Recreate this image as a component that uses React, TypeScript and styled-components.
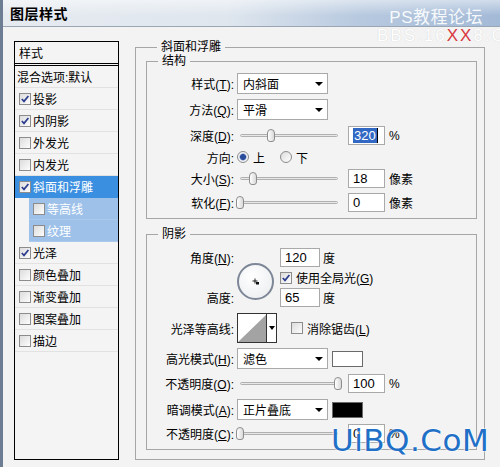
import styled, { createGlobalStyle } from "styled-components"

const GlobalStyle = createGlobalStyle`
    html, body {
        margin: 0;
        padding: 0;
        background: #f3f3f3;
    }

    body {
        font-family: "Liberation Sans", "Noto Sans CJK SC", sans-serif;
        font-size: 12px;
        color: #000;
    }
`

const Window = styled.div`
    position: relative;
    width: 500px;
    height: 467px;
    overflow: hidden;
    box-sizing: border-box;
    background: #f3f3f3;
    border-left: 3px solid #6d7d93;
`

const TitleBar = styled.div`
    height: 27px;
    box-sizing: border-box;
    border-bottom: 1px solid #9aa6b4;
    padding-left: 7px;
    display: flex;
    align-items: center;
    background:
        linear-gradient(to bottom, rgba(255, 255, 255, 0.5), rgba(255, 255, 255, 0) 60%),
        linear-gradient(to right, #e6ebf0 0%, #dfe6ee 45%, #b7c9df 72%, #a3bad7 100%);
`

const Title = styled.span`
    font-size: 14px;
    font-weight: bold;
    letter-spacing: 0.5px;
`

const Body = styled.div`
    display: flex;
    gap: 16px;
    padding: 14px 0 0 11px;
`

const StyleList = styled.div`
    width: 105px;
    height: 419px;
    box-sizing: border-box;
    border: 1px solid #000;
    background: #f4f4f4;
`

const ListHeader = styled.div`
    height: 21px;
    display: flex;
    align-items: center;
    padding-left: 4px;
    border-bottom: 3px double #000;
`

const ListItem = styled.div<{ $selected?: boolean; $sub?: boolean; $plain?: boolean }>`
    height: 22px;
    box-sizing: border-box;
    display: flex;
    align-items: center;
    gap: 2px;
    padding-left: ${props => props.$plain ? 2 : 4}px;
    margin-left: ${props => props.$sub ? 14 : 0}px;
    border-bottom: 1px solid ${props => props.$selected ? '#3b8fe0' : props.$sub ? '#a9c8ea' : '#e2e2e2'};
    background: ${props => props.$selected ? '#3b8fe0' : props.$sub ? '#9dc1e9' : 'transparent'};
    color: ${props => (props.$selected || props.$sub) ? '#fff' : '#000'};
`

const CheckBoxBox = styled.span`
    width: 12px;
    height: 12px;
    box-sizing: border-box;
    border: 1px solid #8c8c8c;
    background: linear-gradient(135deg, #dcdcdc, #fdfdfd);
    display: inline-flex;
    align-items: center;
    justify-content: center;
    flex-shrink: 0;
`

const CheckBox = ({ checked }: { checked?: boolean }) => (
    <CheckBoxBox>
        {checked && (
            <svg width="10" height="10" viewBox="0 0 10 10">
                <path d="M1.8 5 L4 7.4 L8.4 2" fill="none" stroke="#2c3d8f" strokeWidth="1.7" />
            </svg>
        )}
    </CheckBoxBox>
)

const Main = styled.div`
    width: 350px;
`

const Group = styled.fieldset<{ $outer?: boolean; $gapTop?: number }>`
    margin: ${props => props.$gapTop ?? 0}px 0 0 0;
    padding: ${props => props.$outer ? '2px 7px 9px 10px' : '0'};
    border: 1px solid #a6a6a6;
    min-width: 0;
`

const Legend = styled.legend`
    margin-left: 11px;
    padding: 0 4px;
    font-size: 12px;
    line-height: 12px;
`

const GroupBody = styled.div<{ $top: number }>`
    padding: ${props => props.$top}px 0 6px 0;
`

const Row = styled.div<{ $h: number; $mt?: number }>`
    display: flex;
    align-items: center;
    height: ${props => props.$h}px;
    margin-top: ${props => props.$mt ?? 0}px;
`

const Label = styled.div`
    width: 87px;
    margin-right: 3px;
    text-align: right;
    white-space: nowrap;
`

const Select = styled.div`
    width: 91px;
    height: 21px;
    box-sizing: border-box;
    border: 1px solid #a9a9a9;
    background: #fff;
    display: flex;
    align-items: center;
    justify-content: space-between;
    padding: 0 4px 0 5px;

    &::after {
        content: "";
        border-left: 4px solid transparent;
        border-right: 4px solid transparent;
        border-top: 4px solid #000;
    }
`

const Slider = styled.div`
    position: relative;
    width: 104px;
    height: 19px;
    margin-right: 7px;

    &::before {
        content: "";
        position: absolute;
        left: 3px;
        right: 3px;
        top: 8px;
        height: 3px;
        box-sizing: border-box;
        border: 1px solid #b0b0b0;
        border-radius: 2px;
        background: #e8e8e8;
    }
`

const Thumb = styled.span`
    position: absolute;
    top: 3px;
    width: 8px;
    height: 13px;
    box-sizing: border-box;
    border: 1px solid #8d8d8d;
    border-radius: 4px 4px 3px 3px;
    background: linear-gradient(to right, #ffffff, #d9d9d9);
`

const NumInput = styled.div<{ $w?: number }>`
    width: ${props => props.$w ?? 37}px;
    height: 19px;
    box-sizing: border-box;
    border: 1px solid #a9a9a9;
    background: #fff;
    display: flex;
    align-items: center;
    padding-left: 4px;
    font-size: 13px;
`

const Selected = styled.span`
    background: #3168c4;
    color: #fff;
    padding: 0 1px;
    border-right: 1px solid #000;
`

const Unit = styled.span`
    margin-left: 4px;
`

const RadioDot = styled.span<{ $on?: boolean }>`
    width: 12px;
    height: 12px;
    box-sizing: border-box;
    border-radius: 50%;
    border: 1px solid #8b8b8b;
    background: ${props => props.$on
        ? 'radial-gradient(circle, #2a4a9a 0 2.6px, #8da6d6 3.2px, #f4f4f4 4px)'
        : 'linear-gradient(135deg, #dcdcdc, #fff)'};
    margin-right: 4px;
`

const RadioText = styled.span`
    margin-right: 15px;
`

const AngleBlock = styled.div`
    display: grid;
    grid-template-columns: 87px 37px auto;
    grid-template-rows: 19px 19px 19px;
    column-gap: 3px;
    row-gap: 1px;
    align-items: center;
`

const AngleDial = styled.div`
    grid-column: 2;
    grid-row: 1 / 4;
    width: 37px;
    height: 37px;
    margin-top: 8px;
    box-sizing: border-box;
    border-radius: 50%;
    border: 2px solid #7d8797;
    background: radial-gradient(circle at 40% 35%, #ffffff, #e9ebee);
    display: flex;
    align-items: center;
    justify-content: center;
`

const RightCell = styled.div`
    grid-column: 3;
    display: flex;
    align-items: center;
    gap: 3px;
    padding-left: 3px;
`

const Contour = styled.div`
    width: 40px;
    height: 30px;
    box-sizing: border-box;
    border: 1px solid #333;
    background: #fff;
    display: flex;
`

const ContourArrow = styled.div`
    flex: 1;
    display: flex;
    align-items: center;
    justify-content: center;

    &::after {
        content: "";
        border-left: 3px solid transparent;
        border-right: 3px solid transparent;
        border-top: 4px solid #000;
    }
`

const Swatch = styled.div<{ $color: string }>`
    width: 31px;
    height: 16px;
    margin-left: 4px;
    box-sizing: border-box;
    border: 1px solid #6a6a6a;
    background: ${props => props.$color};
`

const Check = styled.span<{ $ml?: number }>`
    display: flex;
    align-items: center;
    gap: 4px;
    margin-left: ${props => props.$ml ?? 0}px;
`

const TitleMark = styled.div`
    position: absolute;
    top: 3px;
    right: 17px;
    font-size: 17px;
    color: rgba(255, 255, 255, 0.92);
    letter-spacing: 0.5px;
`

const SiteMark = styled.div`
    position: absolute;
    top: 26px;
    left: 374px;
    white-space: nowrap;
    font-size: 17px;
    letter-spacing: 2px;
    color: #ffffff;
    text-shadow: 0 0 1px #c9c9c9;

    b {
        font-weight: normal;
        color: #d8383e;
        text-shadow: none;
    }
`

const UiMark = styled.div`
    position: absolute;
    left: 328px;
    top: 422px;
    font-family: "DejaVu Sans", Verdana, sans-serif;
    font-size: 31px;
    letter-spacing: 0.5px;
    color: #1f70c6;
    text-shadow: 0 0 2px #fff, 0 0 2px #fff;
`

const SliderInput = ({ pos }: { pos: number }) => (
    <Slider>
        <Thumb style={{ left: `${3 + pos * 0.98 - 4}px` }} />
    </Slider>
)

const listItems = [
    { text: '投影', checked: true },
    { text: '内阴影', checked: true },
    { text: '外发光' },
    { text: '内发光' },
    { text: '斜面和浮雕', checked: true, selected: true },
    { text: '等高线', sub: true },
    { text: '纹理', sub: true },
    { text: '光泽', checked: true },
    { text: '颜色叠加' },
    { text: '渐变叠加' },
    { text: '图案叠加' },
    { text: '描边' },
]

const App = () => {
    return (
        <Window>
            <GlobalStyle />
            <TitleBar>
                <Title>图层样式</Title>
            </TitleBar>

            <Body>
                <StyleList>
                    <ListHeader>样式</ListHeader>
                    <ListItem $plain>混合选项:默认</ListItem>
                    {listItems.map(item => (
                        <ListItem key={item.text} $selected={item.selected} $sub={item.sub}>
                            <CheckBox checked={item.checked} />
                            <span>{item.text}</span>
                        </ListItem>
                    ))}
                </StyleList>

                <Main>
                    <Group $outer>
                        <Legend>斜面和浮雕</Legend>

                        <Group>
                            <Legend>结构</Legend>
                            <GroupBody $top={6}>
                                <Row $h={21}>
                                    <Label>样式(<u>T</u>):</Label>
                                    <Select>内斜面</Select>
                                </Row>
                                <Row $h={21} $mt={5}>
                                    <Label>方法(<u>Q</u>):</Label>
                                    <Select>平滑</Select>
                                </Row>
                                <Row $h={19} $mt={6}>
                                    <Label>深度(<u>D</u>):</Label>
                                    <SliderInput pos={32} />
                                    <NumInput><Selected>320</Selected></NumInput>
                                    <Unit>%</Unit>
                                </Row>
                                <Row $h={18} $mt={3}>
                                    <Label>方向:</Label>
                                    <RadioDot $on />
                                    <RadioText>上</RadioText>
                                    <RadioDot />
                                    <RadioText>下</RadioText>
                                </Row>
                                <Row $h={20} $mt={2}>
                                    <Label>大小(<u>S</u>):</Label>
                                    <SliderInput pos={13} />
                                    <NumInput>18</NumInput>
                                    <Unit>像素</Unit>
                                </Row>
                                <Row $h={20} $mt={4}>
                                    <Label>软化(<u>F</u>):</Label>
                                    <SliderInput pos={0} />
                                    <NumInput>0</NumInput>
                                    <Unit>像素</Unit>
                                </Row>
                            </GroupBody>
                        </Group>

                        <Group $gapTop={9}>
                            <Legend>阴影</Legend>
                            <GroupBody $top={8}>
                                <AngleBlock>
                                    <Label>角度(<u>N</u>):</Label>
                                    <AngleDial>
                                        <svg width="12" height="12" viewBox="0 0 12 12">
                                            <path d="M5 2.5 V7.5 M2.5 5 H7.5" stroke="#222" strokeWidth="1" />
                                            <rect x="6" y="6" width="3" height="2.5" fill="#111" />
                                        </svg>
                                    </AngleDial>
                                    <RightCell>
                                        <NumInput $w={40}>120</NumInput>
                                        <span>度</span>
                                    </RightCell>
                                    <RightCell>
                                        <Check>
                                            <CheckBox checked />
                                            <span>使用全局光(<u>G</u>)</span>
                                        </Check>
                                    </RightCell>
                                    <Label>高度:</Label>
                                    <RightCell>
                                        <NumInput $w={40}>65</NumInput>
                                        <span>度</span>
                                    </RightCell>
                                </AngleBlock>

                                <Row $h={30} $mt={6}>
                                    <Label>光泽等高线:</Label>
                                    <Contour>
                                        <svg width="29" height="28" viewBox="0 0 29 28">
                                            <polygon points="0,28 29,0 29,28" fill="#a3a3a3" />
                                            <line x1="28.5" y1="0" x2="28.5" y2="28" stroke="#333" />
                                        </svg>
                                        <ContourArrow />
                                    </Contour>
                                    <Check $ml={14}>
                                        <CheckBox />
                                        <span>消除锯齿(<u>L</u>)</span>
                                    </Check>
                                </Row>
                                <Row $h={21} $mt={5}>
                                    <Label>高光模式(<u>H</u>):</Label>
                                    <Select>滤色</Select>
                                    <Swatch $color="#fff" />
                                </Row>
                                <Row $h={19} $mt={5}>
                                    <Label>不透明度(<u>O</u>):</Label>
                                    <SliderInput pos={100} />
                                    <NumInput>100</NumInput>
                                    <Unit>%</Unit>
                                </Row>
                                <Row $h={21} $mt={6}>
                                    <Label>暗调模式(<u>A</u>):</Label>
                                    <Select>正片叠底</Select>
                                    <Swatch $color="#000" />
                                </Row>
                                <Row $h={19} $mt={4}>
                                    <Label>不透明度(<u>C</u>):</Label>
                                    <SliderInput pos={0} />
                                    <NumInput>0</NumInput>
                                    <Unit>%</Unit>
                                </Row>
                            </GroupBody>
                        </Group>
                    </Group>
                </Main>
            </Body>

            <TitleMark>PS教程论坛</TitleMark>
            <SiteMark>BBS.16<b>XX</b>8.COM</SiteMark>
            <UiMark>UiBQ.CoM</UiMark>
        </Window>
    )
}

export default App
